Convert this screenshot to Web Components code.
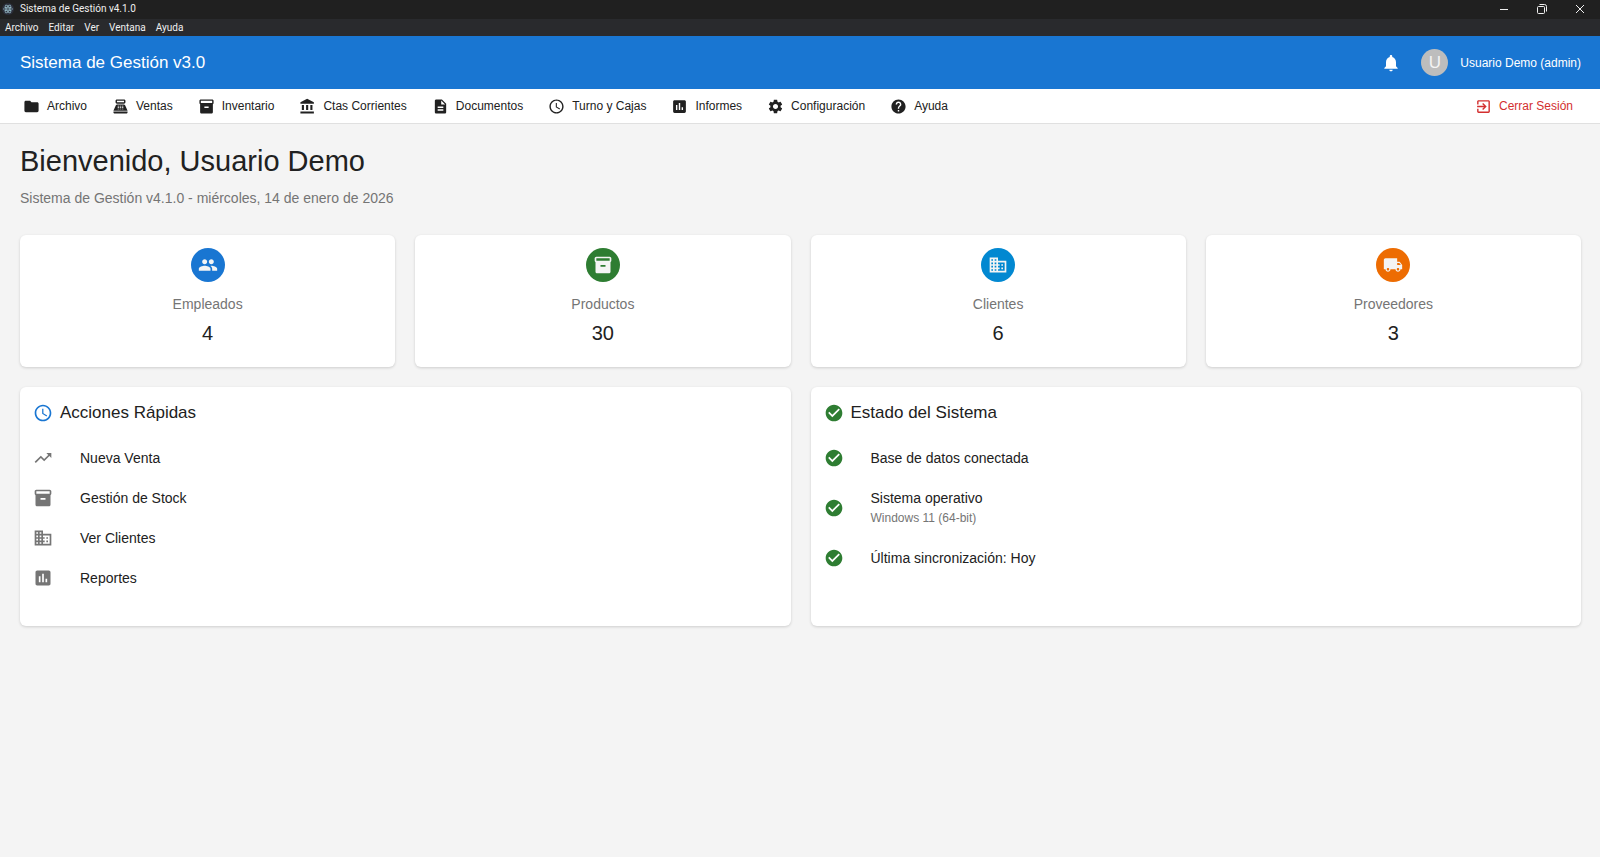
<!DOCTYPE html>
<html lang="es">
<head>
<meta charset="utf-8">
<meta name="viewport" content="width=device-width, initial-scale=1">
<title>Sistema de Gestión v4.1.0</title>
<style>
    :root {
        --primary: #1976d2;
        --success: #2e7d32;
        --info: #0288d1;
        --warning: #ed6c02;
        --error: #d32f2f;
        --text: #212121;
        --text-secondary: #757575;
    }
    body {
        margin: 0;
        background-color: #f4f4f4;
        color: var(--text);
        font-family: "Liberation Sans", Arial, sans-serif;
        font-size: 14px;
    }
</style>
</head>
<body>
<gestion-app></gestion-app>

<script>
// Material icon shapes, all on a 24x24 grid
const ICONS = {
    folder: "M10 4H4c-1.1 0-1.99.9-1.99 2L2 18c0 1.1.9 2 2 2h16c1.1 0 2-.9 2-2V8c0-1.1-.9-2-2-2h-8l-2-2z",
    register: "M17 2H7c-1.1 0-2 .9-2 2v2c0 1.1.9 2 2 2h10c1.1 0 2-.9 2-2V4c0-1.1-.9-2-2-2zm0 4H7V4h10v2zm3 16H4c-1.1 0-2-.9-2-2v-1h20v1c0 1.1-.9 2-2 2zM18.53 10.19C18.21 9.47 17.49 9 16.7 9H7.3c-.79 0-1.51.47-1.83 1.19L2 18h20l-3.47-7.81zM10 16H8v-1h2v1zm0-2H8v-1h2v1zm0-2H8v-1h2v1zm3 4h-2v-1h2v1zm0-2h-2v-1h2v1zm0-2h-2v-1h2v1zm3 4h-2v-1h2v1zm0-2h-2v-1h2v1zm0-2h-2v-1h2v1z",
    inventory: "M20 2H4c-1 0-2 .9-2 2v3.01c0 .72.43 1.34 1 1.69V20c0 1.1 1.1 2 2 2h14c.9 0 2-.9 2-2V8.7c.57-.35 1-.97 1-1.69V4c0-1.1-1-2-2-2zm-5 12H9v-2h6v2zm5-7H4V4h16v3z",
    bank: "M4 10v7h3v-7H4zm6 0v7h3v-7h-3zM2 22h19v-3H2v3zm14-12v7h3v-7h-3zm-4.5-9L2 6v2h19V6l-9.5-5z",
    document: "M14 2H6c-1.1 0-1.99.9-1.99 2L4 20c0 1.1.89 2 1.99 2H18c1.1 0 2-.9 2-2V8l-6-6zm2 16H8v-2h8v2zm0-4H8v-2h8v2zm-3-5V3.5L18.5 9H13z",
    clock: "M11.99 2C6.47 2 2 6.48 2 12s4.47 10 9.99 10C17.52 22 22 17.52 22 12S17.52 2 11.99 2zM12 20c-4.42 0-8-3.58-8-8s3.58-8 8-8 8 3.58 8 8-3.58 8-8 8zm.5-13H11v6l5.25 3.15.75-1.23-4.5-2.67z",
    chart: "M19 3H5c-1.1 0-2 .9-2 2v14c0 1.1.9 2 2 2h14c1.1 0 2-.9 2-2V5c0-1.1-.9-2-2-2zM9 17H7v-7h2v7zm4 0h-2V7h2v10zm4 0h-2v-4h2v4z",
    settings: "M19.14 12.94c.04-.3.06-.61.06-.94 0-.32-.02-.64-.07-.94l2.03-1.58c.18-.14.23-.41.12-.61l-1.92-3.32c-.12-.22-.37-.29-.59-.22l-2.39.96c-.5-.38-1.03-.7-1.62-.94l-.36-2.54c-.04-.24-.24-.41-.48-.41h-3.84c-.24 0-.43.17-.47.41l-.36 2.54c-.59.24-1.13.57-1.62.94l-2.39-.96c-.22-.08-.47 0-.59.22L2.74 8.87c-.12.21-.08.47.12.61l2.03 1.58c-.05.3-.09.63-.09.94s.02.64.07.94l-2.03 1.58c-.18.14-.23.41-.12.61l1.92 3.32c.12.22.37.29.59.22l2.39-.96c.5.38 1.03.7 1.62.94l.36 2.54c.05.24.24.41.48.41h3.84c.24 0 .44-.17.47-.41l.36-2.54c.59-.24 1.13-.56 1.62-.94l2.39.96c.22.08.47 0 .59-.22l1.92-3.32c.12-.22.07-.47-.12-.61l-2.01-1.58zM12 15.6c-1.98 0-3.6-1.62-3.6-3.6s1.62-3.6 3.6-3.6 3.6 1.62 3.6 3.6-1.62 3.6-3.6 3.6z",
    help: "M12 2C6.48 2 2 6.48 2 12s4.48 10 10 10 10-4.48 10-10S17.52 2 12 2zm1 17h-2v-2h2v2zm2.07-7.75l-.9.92C13.45 12.9 13 13.5 13 15h-2v-.5c0-1.1.45-2.1 1.17-2.83l1.24-1.26c.37-.36.59-.86.59-1.41 0-1.1-.9-2-2-2s-2 .9-2 2H8c0-2.21 1.79-4 4-4s4 1.79 4 4c0 .88-.36 1.68-.93 2.25z",
    exit: "M10.09 15.59L11.5 17l5-5-5-5-1.41 1.41L12.67 11H3v2h9.67l-2.58 2.59zM19 3H5c-1.11 0-2 .9-2 2v4h2V5h14v14H5v-4H3v4c0 1.1.89 2 2 2h14c1.1 0 2-.9 2-2V5c0-1.1-.9-2-2-2z",
    bell: "M12 22c1.1 0 2-.9 2-2h-4c0 1.1.89 2 2 2zm6-6v-5c0-3.07-1.64-5.64-4.5-6.32V4c0-.83-.67-1.5-1.5-1.5s-1.5.67-1.5 1.5v.68C7.63 5.36 6 7.92 6 11v5l-2 2v1h16v-1l-2-2z",
    people: "M16 11c1.66 0 2.99-1.34 2.99-3S17.66 5 16 5c-1.66 0-3 1.34-3 3s1.34 3 3 3zm-8 0c1.66 0 2.99-1.34 2.99-3S9.66 5 8 5C6.34 5 5 6.34 5 8s1.34 3 3 3zm0 2c-2.33 0-7 1.17-7 3.5V19h14v-2.5c0-2.33-4.67-3.5-7-3.5zm8 0c-.29 0-.62.02-.97.05 1.16.84 1.97 1.97 1.97 3.45V19h6v-2.5c0-2.33-4.67-3.5-7-3.5z",
    business: "M12 7V3H2v18h20V7H12zM6 19H4v-2h2v2zm0-4H4v-2h2v2zm0-4H4V9h2v2zm0-4H4V5h2v2zm4 12H8v-2h2v2zm0-4H8v-2h2v2zm0-4H8V9h2v2zm0-4H8V5h2v2zm10 12h-8v-2h2v-2h-2v-2h2v-2h-2V9h8v10zm-2-8h-2v2h2v-2zm0 4h-2v2h2v-2z",
    truck: "M20 8h-3V4H3c-1.1 0-2 .9-2 2v11h2c0 1.66 1.34 3 3 3s3-1.34 3-3h6c0 1.66 1.34 3 3 3s3-1.34 3-3h2v-5l-3-4zM6 18.5c-.83 0-1.5-.67-1.5-1.5s.67-1.5 1.5-1.5 1.5.67 1.5 1.5-.67 1.5-1.5 1.5zm13.5-9l1.96 2.5H17V9.5h2.5zm-1.5 9c-.83 0-1.5-.67-1.5-1.5s.67-1.5 1.5-1.5 1.5.67 1.5 1.5-.67 1.5-1.5 1.5z",
    trending: "M16 6l2.29 2.29-4.88 4.88-4-4L2 16.59 3.41 18l6-6 4 4 6.3-6.29L22 12V6h-6z",
    check: "M12 2C6.48 2 2 6.48 2 12s4.48 10 10 10 10-4.48 10-10S17.52 2 12 2zm-2 15l-5-5 1.41-1.41L10 14.17l7.59-7.59L19 8l-9 9z"
};

class GsIcon extends HTMLElement {
    constructor() {
        super();
        this.attachShadow({ mode: "open" });
    }

    connectedCallback() {
        this.shadowRoot.innerHTML = `
            <style>
                :host {
                    display: block;
                    flex: none;
                    width: var(--icon-size, 20px);
                    height: var(--icon-size, 20px);
                }
                svg {
                    display: block;
                    width: 100%;
                    height: 100%;
                    fill: currentColor;
                }
            </style>
            <svg viewBox="0 0 24 24" aria-hidden="true"><path d="${ICONS[this.getAttribute("name")]}"/></svg>`;
    }
}

// Native window frame: title, window controls and the system menu
class WindowFrame extends HTMLElement {
    constructor() {
        super();
        this.attachShadow({ mode: "open" });
        this.shadowRoot.innerHTML = `
            <style>
                :host {
                    display: block;
                    color: #f0f0f0;
                    font-family: Roboto, "Open Sans", sans-serif;
                    font-size: 10px;
                    line-height: 16px;
                }
                .title {
                    box-sizing: border-box;
                    display: flex;
                    align-items: center;
                    height: 19px;
                    padding: 0 1px 1px 2px;
                    gap: 6px;
                    background-color: #202020;
                }
                .title span {
                    flex: 1;
                }
                .controls {
                    display: flex;
                }
                button {
                    border: 0;
                    padding: 0;
                    background: none;
                    color: inherit;
                    font: inherit;
                }
                .controls button {
                    display: flex;
                    justify-content: center;
                    width: 38px;
                }
                .controls svg {
                    fill: none;
                    stroke: currentColor;
                }
                nav {
                    display: flex;
                    height: 17px;
                    padding: 0 5px;
                    gap: 10px;
                    background-color: #292a2d;
                }
            </style>
            <div class="title">
                <svg width="12" height="12" viewBox="0 0 24 24" aria-hidden="true">
                    <circle cx="12" cy="12" r="12" fill="#2b2e3a"/>
                    <g fill="none" stroke="#9fc7d4" stroke-width="1.3">
                        <ellipse cx="12" cy="12" rx="9" ry="3.6"/>
                        <ellipse cx="12" cy="12" rx="9" ry="3.6" transform="rotate(60 12 12)"/>
                        <ellipse cx="12" cy="12" rx="9" ry="3.6" transform="rotate(120 12 12)"/>
                    </g>
                    <circle cx="12" cy="12" r="1.5" fill="#9fc7d4"/>
                </svg>
                <span>Sistema de Gestión v4.1.0</span>
                <div class="controls">
                    <button aria-label="Minimizar"><svg width="10" height="10"><path d="M1 5.5h8"/></svg></button>
                    <button aria-label="Restaurar"><svg width="10" height="10"><rect x=".5" y="2.5" width="7" height="7" rx="1"/><path d="M2.5.5h5a2 2 0 0 1 2 2v5"/></svg></button>
                    <button aria-label="Cerrar"><svg width="10" height="10"><path d="M1 1l8 8M9 1l-8 8"/></svg></button>
                </div>
            </div>
            <nav>
                <button>Archivo</button>
                <button>Editar</button>
                <button>Ver</button>
                <button>Ventana</button>
                <button>Ayuda</button>
            </nav>`;
    }
}

class AppHeader extends HTMLElement {
    constructor() {
        super();
        this.attachShadow({ mode: "open" });
        this.shadowRoot.innerHTML = `
            <style>
                :host {
                    display: flex;
                    align-items: center;
                    height: 53px;
                    padding: 0 19px 0 20px;
                    background-color: var(--primary);
                    color: #fff;
                    font-size: 12px;
                }
                .brand {
                    flex: 1;
                    font-size: 17px;
                }
                button {
                    border: 0;
                    padding: 0;
                    margin-right: 20px;
                    background: none;
                    color: inherit;
                }
                .avatar {
                    display: flex;
                    align-items: center;
                    justify-content: center;
                    width: 27px;
                    height: 27px;
                    margin-right: 12px;
                    border-radius: 50%;
                    background-color: #bdbdbd;
                    color: #f4f4f4;
                    font-size: 17px;
                }
            </style>
            <div class="brand"><slot></slot></div>
            <button aria-label="Notificaciones"><gs-icon name="bell"></gs-icon></button>
            <div class="avatar"><slot name="initial"></slot></div>
            <slot name="user"></slot>`;
    }
}

class NavItem extends HTMLElement {
    constructor() {
        super();
        this.attachShadow({ mode: "open" });
    }

    connectedCallback() {
        this.shadowRoot.innerHTML = `
            <style>
                :host {
                    display: block;
                    --icon-size: 17px;
                }
                :host([danger]) {
                    color: var(--error);
                    margin-left: auto;
                }
                button {
                    display: flex;
                    align-items: center;
                    gap: 7px;
                    border: 0;
                    padding: 0;
                    background: none;
                    color: inherit;
                    font: inherit;
                    font-size: 12px;
                    white-space: nowrap;
                }
            </style>
            <button><gs-icon name="${this.getAttribute("icon")}"></gs-icon><slot></slot></button>`;
    }
}

class NavBar extends HTMLElement {
    constructor() {
        super();
        this.attachShadow({ mode: "open" });
        this.shadowRoot.innerHTML = `
            <style>
                :host {
                    display: block;
                    background-color: #fff;
                    border-bottom: 1px solid #e0e0e0;
                }
                nav {
                    display: flex;
                    align-items: center;
                    gap: 25px;
                    height: 34px;
                    padding: 0 27px 0 23px;
                }
            </style>
            <nav><slot></slot></nav>`;
    }
}

class StatCard extends HTMLElement {
    constructor() {
        super();
        this.attachShadow({ mode: "open" });
    }

    connectedCallback() {
        this.shadowRoot.innerHTML = `
            <style>
                :host {
                    display: flex;
                    flex-direction: column;
                    align-items: center;
                    padding: 13px 13px 20px;
                    border-radius: 6px;
                    background-color: #fff;
                    box-shadow: 0 1px 3px rgba(0, 0, 0, 0.16);
                }
                .circle {
                    display: flex;
                    align-items: center;
                    justify-content: center;
                    width: 34px;
                    height: 34px;
                    margin-bottom: 12px;
                    border-radius: 50%;
                    background-color: var(--${this.getAttribute("color")});
                    color: #f4f4f4;
                }
                .label {
                    color: var(--text-secondary);
                    line-height: 20px;
                }
                .value {
                    margin-top: 5px;
                    font-size: 20px;
                    line-height: 28px;
                }
            </style>
            <div class="circle"><gs-icon name="${this.getAttribute("icon")}"></gs-icon></div>
            <div class="label"><slot></slot></div>
            <div class="value">${this.getAttribute("value")}</div>`;
    }
}

class InfoPanel extends HTMLElement {
    constructor() {
        super();
        this.attachShadow({ mode: "open" });
    }

    connectedCallback() {
        this.shadowRoot.innerHTML = `
            <style>
                :host {
                    display: block;
                    padding: 14px 13px 28px;
                    border-radius: 6px;
                    background-color: #fff;
                    box-shadow: 0 1px 3px rgba(0, 0, 0, 0.16);
                }
                h2 {
                    display: flex;
                    align-items: center;
                    gap: 7px;
                    margin: 0 0 13px;
                    font-size: 17px;
                    font-weight: 400;
                    line-height: 24px;
                }
                gs-icon {
                    color: var(--${this.getAttribute("color")});
                }
            </style>
            <h2><gs-icon name="${this.getAttribute("icon")}"></gs-icon>${this.getAttribute("heading")}</h2>
            <slot></slot>`;
    }
}

// A row of a panel. With "action" the row is a button, otherwise plain text.
class PanelRow extends HTMLElement {
    constructor() {
        super();
        this.attachShadow({ mode: "open" });
    }

    connectedCallback() {
        const tag = this.hasAttribute("action") ? "button" : "div";
        this.shadowRoot.innerHTML = `
            <style>
                :host {
                    display: block;
                }
                .row {
                    display: flex;
                    align-items: center;
                    gap: 27px;
                    width: 100%;
                    padding: 10px 0;
                    border: 0;
                    background: none;
                    color: inherit;
                    font: inherit;
                    line-height: 20px;
                    text-align: left;
                }
                gs-icon {
                    color: var(--${this.getAttribute("color") || "text-secondary"});
                }
                ::slotted(small) {
                    display: block;
                    color: var(--text-secondary);
                    font-size: 12px;
                }
            </style>
            <${tag} class="row">
                <gs-icon name="${this.getAttribute("icon")}"></gs-icon>
                <span><slot></slot></span>
            </${tag}>`;
    }
}

class GestionApp extends HTMLElement {
    constructor() {
        super();
        this.attachShadow({ mode: "open" });
        this.shadowRoot.innerHTML = `
            <style>
                :host {
                    display: block;
                }
                main {
                    padding: 20px 19px 20px 20px;
                }
                h1 {
                    margin: 0 0 10px;
                    font-size: 29px;
                    font-weight: 400;
                    line-height: 34px;
                }
                p {
                    margin: 0 0 27px;
                    color: var(--text-secondary);
                    line-height: 20px;
                }
                .stats,
                .panels {
                    display: grid;
                    gap: 20px;
                }
                .stats {
                    grid-template-columns: repeat(4, 1fr);
                    margin-bottom: 20px;
                }
                .panels {
                    grid-template-columns: repeat(2, 1fr);
                }
            </style>
            <window-frame></window-frame>
            <app-header>Sistema de Gestión v3.0<span slot="initial">U</span><span slot="user">Usuario Demo (admin)</span></app-header>
            <nav-bar>
                <nav-item icon="folder">Archivo</nav-item>
                <nav-item icon="register">Ventas</nav-item>
                <nav-item icon="inventory">Inventario</nav-item>
                <nav-item icon="bank">Ctas Corrientes</nav-item>
                <nav-item icon="document">Documentos</nav-item>
                <nav-item icon="clock">Turno y Cajas</nav-item>
                <nav-item icon="chart">Informes</nav-item>
                <nav-item icon="settings">Configuración</nav-item>
                <nav-item icon="help">Ayuda</nav-item>
                <nav-item icon="exit" danger>Cerrar Sesión</nav-item>
            </nav-bar>
            <main>
                <h1>Bienvenido, Usuario Demo</h1>
                <p>Sistema de Gestión v4.1.0 - miércoles, 14 de enero de 2026</p>
                <section class="stats">
                    <stat-card icon="people" color="primary" value="4">Empleados</stat-card>
                    <stat-card icon="inventory" color="success" value="30">Productos</stat-card>
                    <stat-card icon="business" color="info" value="6">Clientes</stat-card>
                    <stat-card icon="truck" color="warning" value="3">Proveedores</stat-card>
                </section>
                <section class="panels">
                    <info-panel icon="clock" color="primary" heading="Acciones Rápidas">
                        <panel-row action icon="trending">Nueva Venta</panel-row>
                        <panel-row action icon="inventory">Gestión de Stock</panel-row>
                        <panel-row action icon="business">Ver Clientes</panel-row>
                        <panel-row action icon="chart">Reportes</panel-row>
                    </info-panel>
                    <info-panel icon="check" color="success" heading="Estado del Sistema">
                        <panel-row icon="check" color="success">Base de datos conectada</panel-row>
                        <panel-row icon="check" color="success">Sistema operativo<small>Windows 11 (64-bit)</small></panel-row>
                        <panel-row icon="check" color="success">Última sincronización: Hoy</panel-row>
                    </info-panel>
                </section>
            </main>`;
    }
}

customElements.define("gs-icon", GsIcon);
customElements.define("window-frame", WindowFrame);
customElements.define("app-header", AppHeader);
customElements.define("nav-item", NavItem);
customElements.define("nav-bar", NavBar);
customElements.define("stat-card", StatCard);
customElements.define("info-panel", InfoPanel);
customElements.define("panel-row", PanelRow);
customElements.define("gestion-app", GestionApp);
</script>
</body>
</html>
